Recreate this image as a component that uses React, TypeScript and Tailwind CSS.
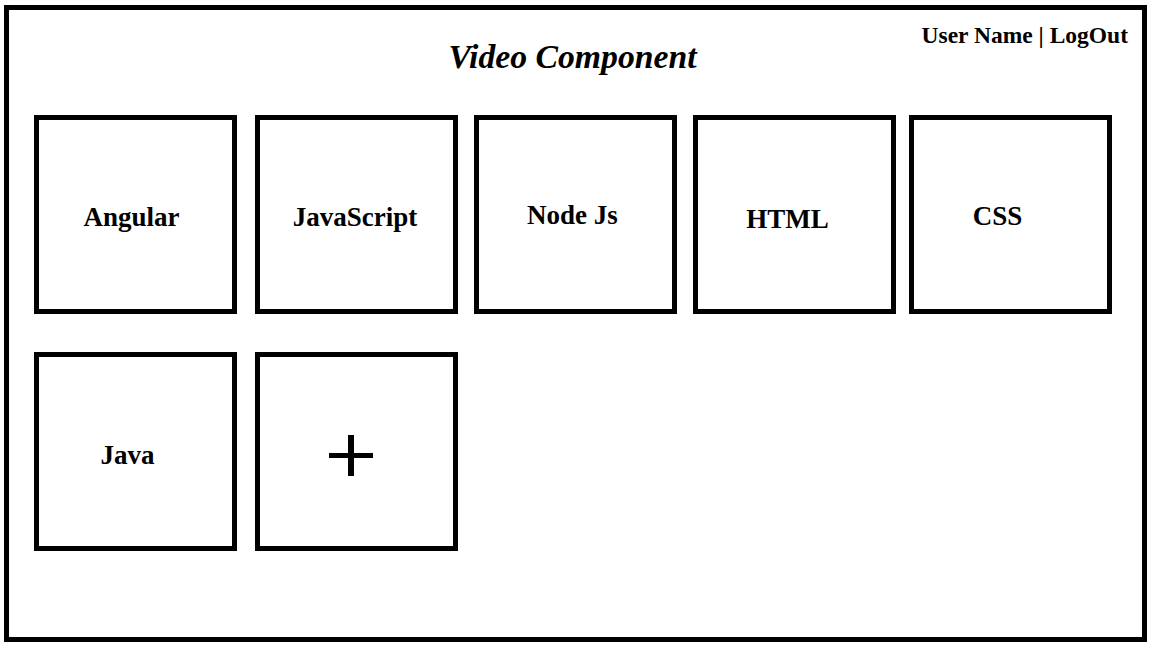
import React from "react";

type Tile = { label?: string; plus?: boolean; cls: string; ml: string };

const row1: Tile[] = [
  { label: "Angular", cls: "pr-[8px] pt-[5px]", ml: "ml-[25px]" },
  { label: "JavaScript", cls: "pr-[3px] pt-[6px]", ml: "ml-[18px]" },
  { label: "Node Js", cls: "pr-[6px] pt-[2px]", ml: "ml-[16px]" },
  { label: "HTML", cls: "pr-[14px] pt-[9px]", ml: "ml-[16px]" },
  { label: "CSS", cls: "pr-[26px] pt-[3px]", ml: "ml-[13px]" },
];

const row2: Tile[] = [
  { label: "Java", cls: "pr-[16px] pt-[8px]", ml: "ml-[25px]" },
  { plus: true, cls: "pr-[11px] pt-[8px]", ml: "ml-[18px]" },
];

function Box({ t }: { t: Tile }) {
  return (
    <div
      className={`${t.ml} w-[203px] h-[199px] shrink-0 border-[5px] border-black flex items-center justify-center ${t.cls}`}
    >
      {t.plus ? (
        <svg width="44" height="41" viewBox="0 0 44 41">
          <rect x="19" y="0" width="6" height="41" fill="#000" />
          <rect x="0" y="18" width="44" height="5" fill="#000" />
        </svg>
      ) : (
        <span className="text-[27px] font-bold text-black">{t.label}</span>
      )}
    </div>
  );
}

export default function App() {
  return (
    <div
      className="w-[1152px] h-[648px] bg-white overflow-hidden pt-[5px] pl-[4px]"
      style={{ fontFamily: '"Liberation Serif", "Times New Roman", serif' }}
    >
      <div className="w-[1143px] h-[637px] border-[5px] border-black flex flex-col">
        <div className="flex justify-end pr-[14px] pt-[12px]">
          <span className="text-[23.5px] font-bold text-black leading-[26px]">
            User Name | LogOut
          </span>
        </div>
        <div className="flex justify-center -mt-[10px] pr-[6px]">
          <h1 className="text-[33.7px] font-bold italic text-black leading-[37px]">
            Video Component
          </h1>
        </div>
        <div className="flex mt-[40px]">
          {row1.map((t, i) => (
            <Box key={i} t={t} />
          ))}
        </div>
        <div className="flex mt-[38px]">
          {row2.map((t, i) => (
            <Box key={i} t={t} />
          ))}
        </div>
      </div>
    </div>
  );
}
